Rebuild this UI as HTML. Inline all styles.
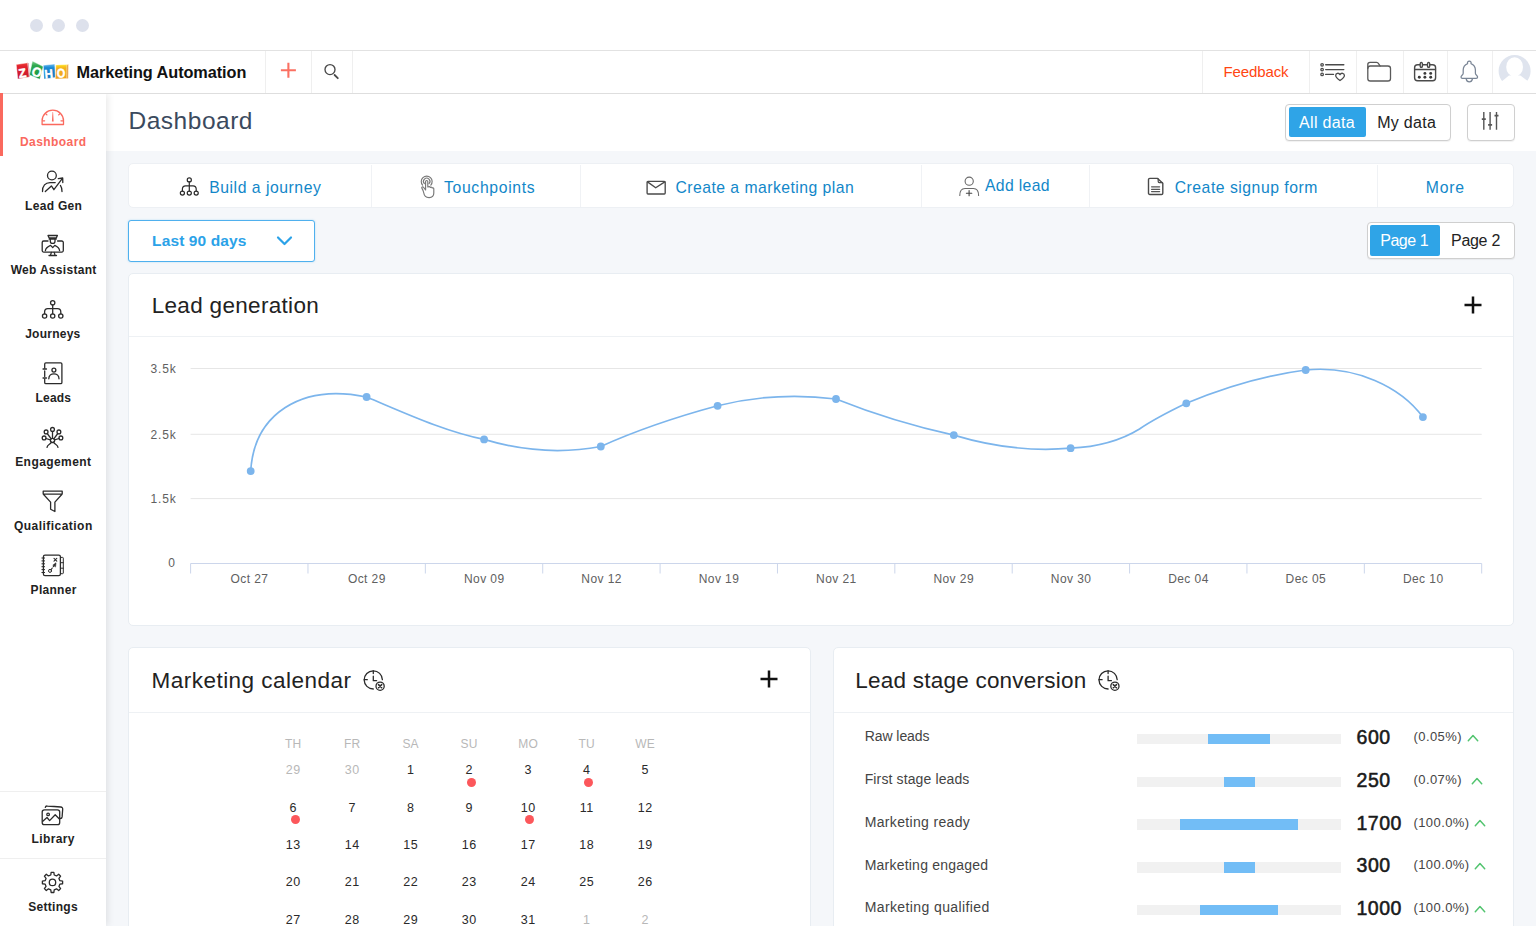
<!DOCTYPE html>
<html lang="en">
<head>
<meta charset="utf-8">
<title>Marketing Automation - Dashboard</title>
<style>
*{box-sizing:border-box;margin:0;padding:0}
html,body{width:1536px;height:926px;overflow:hidden;background:#f5f7fa;font-family:"Liberation Sans","DejaVu Sans",sans-serif;color:#222}
.t{position:absolute;white-space:nowrap;line-height:1;display:block}
.a{position:absolute;display:block}
svg{position:absolute;overflow:visible}
#win{position:absolute;left:0;top:0;width:1536px;height:51px;background:#fff;border-bottom:1px solid #e2e2e2}
#win i{position:absolute;top:19px;width:13px;height:13px;border-radius:50%;background:#dde1ec}
#hdr{position:absolute;left:0;top:51px;width:1536px;height:43px;background:#fff;border-bottom:1px solid #dedede;box-shadow:0 1px 1px rgba(0,0,0,.05)}
.vd{position:absolute;top:51px;width:1px;height:42px;background:#efefef}
#side{position:absolute;left:0;top:94px;width:106px;height:832px;background:#fff;box-shadow:2px 0 7px rgba(0,0,0,.09);clip-path:inset(0 -20px 0 0)}
#titlebar{position:absolute;left:106px;top:94px;width:1430px;height:57px;background:#fff}
.card{position:absolute;background:#fff;border:1px solid #e8edf2;border-radius:5px}
.hl{position:absolute;height:1px;background:#eef1f4}
.k{fill:none;stroke:#333;stroke-width:1.2;stroke-linecap:round;stroke-linejoin:round}
</style>
</head>
<body>
<div id="win"><i style="left:30px"></i><i style="left:52px"></i><i style="left:76px"></i></div>
<div id="hdr"></div>
<div id="titlebar"></div>
<div id="side"></div>
<div class="vd" style="left:265px"></div>
<div class="vd" style="left:311px"></div>
<div class="vd" style="left:352px"></div>
<div class="vd" style="left:1202px"></div>
<div class="vd" style="left:1309px"></div>
<div class="vd" style="left:1356px"></div>
<div class="vd" style="left:1403px"></div>
<div class="vd" style="left:1447px"></div>
<div class="vd" style="left:1492px"></div>
<span class="t" style="left:76.50px;top:64.00px;font-size:16.3px;font-weight:bold;color:#111;letter-spacing:-0.073px;">Marketing Automation</span>
<span class="t" style="left:1223.50px;top:64.00px;font-size:15px;font-weight:normal;color:#ff4511;letter-spacing:-0.110px;">Feedback</span>
<span class="t" style="left:128.50px;top:109.00px;font-size:24.5px;font-weight:normal;color:#3b4a5e;letter-spacing:0.516px;">Dashboard</span>
<div class="a" style="left:1285px;top:104px;width:166px;height:37px;border:1px solid #cfcfcf;border-radius:4px;background:#fff;box-shadow:0 1px 1px rgba(0,0,0,.06)"></div>
<div class="a" style="left:1289px;top:107px;width:77px;height:30px;background:#2fa4e7;border-radius:2px"></div>
<span class="t" style="left:1299.00px;top:115.00px;font-size:16px;font-weight:normal;color:#fff;letter-spacing:0.329px;">All data</span>
<span class="t" style="left:1377.20px;top:115.00px;font-size:16px;font-weight:normal;color:#222;letter-spacing:0.298px;">My data</span>
<div class="a" style="left:1467px;top:104px;width:48px;height:37px;border:1px solid #cfcfcf;border-radius:4px;background:#fff;box-shadow:0 1px 1px rgba(0,0,0,.06)"></div>
<div class="a" style="left:0;top:93px;width:3px;height:63px;background:#fa695e"></div>
<span class="t" style="left:20.00px;top:136.00px;font-size:12px;font-weight:bold;color:#fa695e;letter-spacing:0.425px;">Dashboard</span>
<span class="t" style="left:25.11px;top:200.00px;font-size:12px;font-weight:bold;color:#222;letter-spacing:0.300px;">Lead Gen</span>
<span class="t" style="left:10.69px;top:264.00px;font-size:12px;font-weight:bold;color:#222;letter-spacing:0.300px;">Web Assistant</span>
<span class="t" style="left:25.20px;top:328.00px;font-size:12px;font-weight:bold;color:#222;letter-spacing:0.243px;">Journeys</span>
<span class="t" style="left:35.50px;top:392.00px;font-size:12px;font-weight:bold;color:#222;letter-spacing:0.204px;">Leads</span>
<span class="t" style="left:15.20px;top:456.00px;font-size:12px;font-weight:bold;color:#222;letter-spacing:0.429px;">Engagement</span>
<span class="t" style="left:13.90px;top:520.00px;font-size:12px;font-weight:bold;color:#222;letter-spacing:0.471px;">Qualification</span>
<span class="t" style="left:30.59px;top:584.00px;font-size:12px;font-weight:bold;color:#222;letter-spacing:0.300px;">Planner</span>
<span class="t" style="left:31.50px;top:833.00px;font-size:12px;font-weight:bold;color:#222;letter-spacing:0.388px;">Library</span>
<span class="t" style="left:28.20px;top:901.00px;font-size:12px;font-weight:bold;color:#222;letter-spacing:0.308px;">Settings</span>
<div class="hl" style="left:0;top:791px;width:106px;background:#efefef"></div>
<div class="hl" style="left:0;top:858px;width:106px;background:#efefef"></div>
<div class="card" style="left:128px;top:163px;width:1386px;height:45px;border-color:#edf0f4"></div>
<div class="a" style="left:371px;top:165px;width:1px;height:42px;background:#f0f2f5"></div>
<div class="a" style="left:580px;top:165px;width:1px;height:42px;background:#f0f2f5"></div>
<div class="a" style="left:921px;top:165px;width:1px;height:42px;background:#f0f2f5"></div>
<div class="a" style="left:1089px;top:165px;width:1px;height:42px;background:#f0f2f5"></div>
<div class="a" style="left:1377px;top:165px;width:1px;height:42px;background:#f0f2f5"></div>
<span class="t" style="left:209.30px;top:180.00px;font-size:15.75px;font-weight:normal;color:#1287c9;letter-spacing:0.521px;">Build a journey</span>
<span class="t" style="left:444.00px;top:180.00px;font-size:15.75px;font-weight:normal;color:#1287c9;letter-spacing:0.658px;">Touchpoints</span>
<span class="t" style="left:675.50px;top:180.00px;font-size:15.75px;font-weight:normal;color:#1287c9;letter-spacing:0.457px;">Create a marketing plan</span>
<span class="t" style="left:985.00px;top:178.00px;font-size:15.75px;font-weight:normal;color:#1287c9;letter-spacing:0.340px;">Add lead</span>
<span class="t" style="left:1174.70px;top:180.00px;font-size:15.75px;font-weight:normal;color:#1287c9;letter-spacing:0.514px;">Create signup form</span>
<span class="t" style="left:1425.80px;top:180.00px;font-size:15.75px;font-weight:normal;color:#1287c9;letter-spacing:0.754px;">More</span>
<div class="a" style="left:128px;top:220px;width:187px;height:42px;border:1px solid #4fb0ee;border-radius:3px;background:#fff;box-shadow:0 0 2px rgba(47,164,231,.35)"></div>
<span class="t" style="left:152.10px;top:233.00px;font-size:15.5px;font-weight:bold;color:#2ba2e8;letter-spacing:0.112px;">Last 90 days</span>
<svg style="left:275px;top:235px" width="20" height="13" viewBox="0 0 20 13"><path d="M3 2.5 L9.5 9 L16 2.5" fill="none" stroke="#2ba2e8" stroke-width="2.2" stroke-linecap="round" stroke-linejoin="round"/></svg>
<div class="a" style="left:1366.5px;top:222px;width:148px;height:37px;border:1px solid #cfcfcf;border-radius:4px;background:#fff;box-shadow:0 1px 1px rgba(0,0,0,.06)"></div>
<div class="a" style="left:1369.5px;top:225px;width:70.5px;height:30.5px;background:#2fa4e7;border-radius:2px"></div>
<span class="t" style="left:1380.20px;top:233.00px;font-size:16px;font-weight:normal;color:#fff;letter-spacing:-0.452px;">Page 1</span>
<span class="t" style="left:1451.00px;top:233.00px;font-size:16px;font-weight:normal;color:#222;letter-spacing:-0.285px;">Page 2</span>
<div class="card" style="left:128px;top:273px;width:1386px;height:353px"></div>
<div class="hl" style="left:129px;top:336px;width:1384px"></div>
<span class="t" style="left:151.70px;top:295.00px;font-size:22.5px;font-weight:normal;color:#222;letter-spacing:0.317px;">Lead generation</span>
<svg style="left:1463.3px;top:294.9px" width="20" height="20" viewBox="0 0 20 20"><path d="M10 1.5 V18.5 M1.5 10 H18.5" stroke="#111" stroke-width="2.5" fill="none"/></svg>
<svg style="left:0;top:0" width="1536" height="926" viewBox="0 0 1536 926">
<path d="M190.6 368.5 H1481.7" stroke="#e6e6e6" stroke-width="1" fill="none"/>
<path d="M190.6 434.3 H1481.7" stroke="#e6e6e6" stroke-width="1" fill="none"/>
<path d="M190.6 498.6 H1481.7" stroke="#e6e6e6" stroke-width="1" fill="none"/>
<path d="M190.6 563.5 H1481.7" stroke="#ccd6eb" stroke-width="1" fill="none"/>
<path d="M190.60 563.5 V573.5 M307.97 563.5 V573.5 M425.35 563.5 V573.5 M542.72 563.5 V573.5 M660.09 563.5 V573.5 M777.46 563.5 V573.5 M894.84 563.5 V573.5 M1012.21 563.5 V573.5 M1129.58 563.5 V573.5 M1246.95 563.5 V573.5 M1364.33 563.5 V573.5 M1481.70 563.5 V573.5 " stroke="#ccd6eb" stroke-width="1" fill="none"/>
<path d="M250.7 471.1 C 254 415, 300 383, 366.6 397 C 405.8 413.4, 444.9 431.6, 484.1 439.4 C 523.0 451.1, 561.9 453.9, 600.8 446.5 C 639.7 429.0, 678.7 416.3, 717.6 405.8 C 757.1 395.9, 796.5 393.9, 836 399 C 875.3 414.7, 914.5 426.5, 953.8 435.1 C 992.7 446.8, 1031.7 451.7, 1070.6 448.2 C 1093.6 447.1, 1116.5 443.2, 1139.5 429 C 1155.1 418.4, 1170.7 410.8, 1186.3 403.3 C 1226.1 386.6, 1265.9 375.2, 1305.7 370 C 1355.7 365, 1400.9 387.1, 1422.9 417.1 " stroke="#7cb5ec" stroke-width="1.7" fill="none" stroke-linecap="round" stroke-linejoin="round"/>
<circle cx="250.7" cy="471.1" r="3.9" fill="#7cb5ec"/>
<circle cx="366.6" cy="397" r="3.9" fill="#7cb5ec"/>
<circle cx="484.1" cy="439.4" r="3.9" fill="#7cb5ec"/>
<circle cx="600.8" cy="446.5" r="3.9" fill="#7cb5ec"/>
<circle cx="717.6" cy="405.8" r="3.9" fill="#7cb5ec"/>
<circle cx="836" cy="399" r="3.9" fill="#7cb5ec"/>
<circle cx="953.8" cy="435.1" r="3.9" fill="#7cb5ec"/>
<circle cx="1070.6" cy="448.2" r="3.9" fill="#7cb5ec"/>
<circle cx="1186.3" cy="403.3" r="3.9" fill="#7cb5ec"/>
<circle cx="1305.7" cy="370" r="3.9" fill="#7cb5ec"/>
<circle cx="1422.9" cy="417.1" r="3.9" fill="#7cb5ec"/>
</svg>
<span class="t" style="left:150.50px;top:363.00px;font-size:12px;font-weight:normal;color:#606060;letter-spacing:0.830px;">3.5k</span>
<span class="t" style="left:150.50px;top:429.00px;font-size:12px;font-weight:normal;color:#606060;letter-spacing:0.830px;">2.5k</span>
<span class="t" style="left:150.50px;top:493.00px;font-size:12px;font-weight:normal;color:#606060;letter-spacing:0.830px;">1.5k</span>
<span class="t" style="left:168.20px;top:557.00px;font-size:12px;font-weight:normal;color:#606060;letter-spacing:1.126px;">0</span>
<span class="t" style="left:230.58px;top:573.00px;font-size:12px;font-weight:normal;color:#606060;letter-spacing:0.412px;">Oct 27</span>
<span class="t" style="left:347.95px;top:573.00px;font-size:12px;font-weight:normal;color:#606060;letter-spacing:0.412px;">Oct 29</span>
<span class="t" style="left:463.91px;top:573.00px;font-size:12px;font-weight:normal;color:#606060;letter-spacing:0.444px;">Nov 09</span>
<span class="t" style="left:581.28px;top:573.00px;font-size:12px;font-weight:normal;color:#606060;letter-spacing:0.444px;">Nov 12</span>
<span class="t" style="left:698.66px;top:573.00px;font-size:12px;font-weight:normal;color:#606060;letter-spacing:0.444px;">Nov 19</span>
<span class="t" style="left:816.03px;top:573.00px;font-size:12px;font-weight:normal;color:#606060;letter-spacing:0.444px;">Nov 21</span>
<span class="t" style="left:933.40px;top:573.00px;font-size:12px;font-weight:normal;color:#606060;letter-spacing:0.444px;">Nov 29</span>
<span class="t" style="left:1050.78px;top:573.00px;font-size:12px;font-weight:normal;color:#606060;letter-spacing:0.444px;">Nov 30</span>
<span class="t" style="left:1168.15px;top:573.00px;font-size:12px;font-weight:normal;color:#606060;letter-spacing:0.444px;">Dec 04</span>
<span class="t" style="left:1285.52px;top:573.00px;font-size:12px;font-weight:normal;color:#606060;letter-spacing:0.444px;">Dec 05</span>
<span class="t" style="left:1402.89px;top:573.00px;font-size:12px;font-weight:normal;color:#606060;letter-spacing:0.444px;">Dec 10</span>
<div class="card" style="left:128px;top:647px;width:683px;height:300px"></div>
<div class="hl" style="left:129px;top:712px;width:681px"></div>
<span class="t" style="left:151.50px;top:670.00px;font-size:22.5px;font-weight:normal;color:#222;letter-spacing:0.480px;">Marketing calendar</span>
<svg style="left:759.3px;top:669px" width="20" height="20" viewBox="0 0 20 20"><path d="M10 1.5 V18.5 M1.5 10 H18.5" stroke="#111" stroke-width="2.5" fill="none"/></svg>
<svg style="left:0;top:0" width="1536" height="926" viewBox="0 0 1536 926"><g fill="none" stroke="#2b2b2b" stroke-width="1.3" stroke-linecap="round" stroke-linejoin="round"><path d="M373.3 689.0 A9.1 9.1 0 1 1 382.40000000000003 679.6999999999999"/><path d="M373.3 670.8 V673.6 M364.2 679.6999999999999 H367.3 M373.3 676.1999999999999 V680.6999999999999 H376.6"/><circle cx="380.1" cy="686.1999999999999" r="4.1"/><path d="M378.5 684.6 L381.7 687.8 M381.7 684.6 L378.5 687.8" stroke-width="1.5"/></g></svg>
<span class="t" style="left:284.93px;top:738.00px;font-size:12px;font-weight:normal;color:#b8b8b8;letter-spacing:0.150px;">TH</span>
<span class="t" style="left:343.93px;top:738.00px;font-size:12px;font-weight:normal;color:#b8b8b8;letter-spacing:0.150px;">FR</span>
<span class="t" style="left:402.42px;top:738.00px;font-size:12px;font-weight:normal;color:#b8b8b8;letter-spacing:0.150px;">SA</span>
<span class="t" style="left:460.59px;top:738.00px;font-size:12px;font-weight:normal;color:#b8b8b8;letter-spacing:0.150px;">SU</span>
<span class="t" style="left:518.26px;top:738.00px;font-size:12px;font-weight:normal;color:#b8b8b8;letter-spacing:0.150px;">MO</span>
<span class="t" style="left:578.43px;top:738.00px;font-size:12px;font-weight:normal;color:#b8b8b8;letter-spacing:0.150px;">TU</span>
<span class="t" style="left:635.26px;top:738.00px;font-size:12px;font-weight:normal;color:#b8b8b8;letter-spacing:0.150px;">WE</span>
<span class="t" style="left:285.75px;top:764.00px;font-size:12.5px;font-weight:normal;color:#b8b8b8;letter-spacing:0.600px;">29</span>
<span class="t" style="left:344.75px;top:764.00px;font-size:12.5px;font-weight:normal;color:#b8b8b8;letter-spacing:0.600px;">30</span>
<span class="t" style="left:407.02px;top:764.00px;font-size:12.5px;font-weight:normal;color:#2a2a2a;letter-spacing:0.600px;">1</span>
<span class="t" style="left:465.52px;top:764.00px;font-size:12.5px;font-weight:normal;color:#2a2a2a;letter-spacing:0.600px;">2</span>
<span class="t" style="left:524.52px;top:764.00px;font-size:12.5px;font-weight:normal;color:#2a2a2a;letter-spacing:0.600px;">3</span>
<span class="t" style="left:583.02px;top:764.00px;font-size:12.5px;font-weight:normal;color:#2a2a2a;letter-spacing:0.600px;">4</span>
<span class="t" style="left:641.52px;top:764.00px;font-size:12.5px;font-weight:normal;color:#2a2a2a;letter-spacing:0.600px;">5</span>
<span class="t" style="left:289.52px;top:802.00px;font-size:12.5px;font-weight:normal;color:#2a2a2a;letter-spacing:0.600px;">6</span>
<span class="t" style="left:348.52px;top:802.00px;font-size:12.5px;font-weight:normal;color:#2a2a2a;letter-spacing:0.600px;">7</span>
<span class="t" style="left:407.02px;top:802.00px;font-size:12.5px;font-weight:normal;color:#2a2a2a;letter-spacing:0.600px;">8</span>
<span class="t" style="left:465.52px;top:802.00px;font-size:12.5px;font-weight:normal;color:#2a2a2a;letter-spacing:0.600px;">9</span>
<span class="t" style="left:520.75px;top:802.00px;font-size:12.5px;font-weight:normal;color:#2a2a2a;letter-spacing:0.600px;">10</span>
<span class="t" style="left:579.71px;top:802.00px;font-size:12.5px;font-weight:normal;color:#2a2a2a;letter-spacing:0.600px;">11</span>
<span class="t" style="left:637.75px;top:802.00px;font-size:12.5px;font-weight:normal;color:#2a2a2a;letter-spacing:0.600px;">12</span>
<span class="t" style="left:285.75px;top:839.00px;font-size:12.5px;font-weight:normal;color:#2a2a2a;letter-spacing:0.600px;">13</span>
<span class="t" style="left:344.75px;top:839.00px;font-size:12.5px;font-weight:normal;color:#2a2a2a;letter-spacing:0.600px;">14</span>
<span class="t" style="left:403.25px;top:839.00px;font-size:12.5px;font-weight:normal;color:#2a2a2a;letter-spacing:0.600px;">15</span>
<span class="t" style="left:461.75px;top:839.00px;font-size:12.5px;font-weight:normal;color:#2a2a2a;letter-spacing:0.600px;">16</span>
<span class="t" style="left:520.75px;top:839.00px;font-size:12.5px;font-weight:normal;color:#2a2a2a;letter-spacing:0.600px;">17</span>
<span class="t" style="left:579.25px;top:839.00px;font-size:12.5px;font-weight:normal;color:#2a2a2a;letter-spacing:0.600px;">18</span>
<span class="t" style="left:637.75px;top:839.00px;font-size:12.5px;font-weight:normal;color:#2a2a2a;letter-spacing:0.600px;">19</span>
<span class="t" style="left:285.75px;top:876.00px;font-size:12.5px;font-weight:normal;color:#2a2a2a;letter-spacing:0.600px;">20</span>
<span class="t" style="left:344.75px;top:876.00px;font-size:12.5px;font-weight:normal;color:#2a2a2a;letter-spacing:0.600px;">21</span>
<span class="t" style="left:403.25px;top:876.00px;font-size:12.5px;font-weight:normal;color:#2a2a2a;letter-spacing:0.600px;">22</span>
<span class="t" style="left:461.75px;top:876.00px;font-size:12.5px;font-weight:normal;color:#2a2a2a;letter-spacing:0.600px;">23</span>
<span class="t" style="left:520.75px;top:876.00px;font-size:12.5px;font-weight:normal;color:#2a2a2a;letter-spacing:0.600px;">24</span>
<span class="t" style="left:579.25px;top:876.00px;font-size:12.5px;font-weight:normal;color:#2a2a2a;letter-spacing:0.600px;">25</span>
<span class="t" style="left:637.75px;top:876.00px;font-size:12.5px;font-weight:normal;color:#2a2a2a;letter-spacing:0.600px;">26</span>
<span class="t" style="left:285.75px;top:914.00px;font-size:12.5px;font-weight:normal;color:#2a2a2a;letter-spacing:0.600px;">27</span>
<span class="t" style="left:344.75px;top:914.00px;font-size:12.5px;font-weight:normal;color:#2a2a2a;letter-spacing:0.600px;">28</span>
<span class="t" style="left:403.25px;top:914.00px;font-size:12.5px;font-weight:normal;color:#2a2a2a;letter-spacing:0.600px;">29</span>
<span class="t" style="left:461.75px;top:914.00px;font-size:12.5px;font-weight:normal;color:#2a2a2a;letter-spacing:0.600px;">30</span>
<span class="t" style="left:520.75px;top:914.00px;font-size:12.5px;font-weight:normal;color:#2a2a2a;letter-spacing:0.600px;">31</span>
<span class="t" style="left:583.02px;top:914.00px;font-size:12.5px;font-weight:normal;color:#b8b8b8;letter-spacing:0.600px;">1</span>
<span class="t" style="left:641.52px;top:914.00px;font-size:12.5px;font-weight:normal;color:#b8b8b8;letter-spacing:0.600px;">2</span>
<div class="a" style="left:466.5px;top:777.8px;width:9px;height:9px;border-radius:50%;background:#fc575b"></div>
<div class="a" style="left:583.5px;top:777.8px;width:9px;height:9px;border-radius:50%;background:#fc575b"></div>
<div class="a" style="left:290.5px;top:815.0px;width:9px;height:9px;border-radius:50%;background:#fc575b"></div>
<div class="a" style="left:525.0px;top:815.0px;width:9px;height:9px;border-radius:50%;background:#fc575b"></div>
<div class="card" style="left:833px;top:647px;width:681px;height:300px"></div>
<div class="hl" style="left:834px;top:712px;width:679px"></div>
<span class="t" style="left:855.30px;top:670.00px;font-size:22.5px;font-weight:normal;color:#222;letter-spacing:0.228px;">Lead stage conversion</span>
<svg style="left:0;top:0" width="1536" height="926" viewBox="0 0 1536 926"><g fill="none" stroke="#2b2b2b" stroke-width="1.3" stroke-linecap="round" stroke-linejoin="round"><path d="M1108.1 689.0 A9.1 9.1 0 1 1 1117.1999999999998 679.6999999999999"/><path d="M1108.1 670.8 V673.6 M1099.0 679.6999999999999 H1102.1 M1108.1 676.1999999999999 V680.6999999999999 H1111.3999999999999"/><circle cx="1114.8999999999999" cy="686.1999999999999" r="4.1"/><path d="M1113.3 684.6 L1116.5 687.8 M1116.5 684.6 L1113.3 687.8" stroke-width="1.5"/></g></svg>
<span class="t" style="left:864.70px;top:729.00px;font-size:14px;font-weight:normal;color:#444;letter-spacing:-0.063px;">Raw leads</span>
<div class="a" style="left:1137px;top:733.90px;width:204px;height:10.4px;background:#f1f1f1"></div>
<div class="a" style="left:1207.5px;top:733.90px;width:62.7px;height:10.4px;background:#72bdf6"></div>
<span class="t" style="left:1356.50px;top:728.00px;font-size:19.5px;font-weight:normal;color:#1a1a1a;letter-spacing:0.555px;-webkit-text-stroke:.55px #1a1a1a;">600</span>
<span class="t" style="left:1413.50px;top:730.00px;font-size:13px;font-weight:normal;color:#444;letter-spacing:0.426px;">(0.05%)</span>
<svg style="left:1466.5px;top:733.70px" width="12" height="8" viewBox="0 0 12 8"><path d="M1.3 6.7 L6 1.6 L10.7 6.7" fill="none" stroke="#52c46f" stroke-width="1.5" stroke-linecap="round" stroke-linejoin="round"/></svg>
<span class="t" style="left:864.70px;top:772.00px;font-size:14px;font-weight:normal;color:#444;letter-spacing:0.123px;">First stage leads</span>
<div class="a" style="left:1137px;top:776.65px;width:204px;height:10.4px;background:#f1f1f1"></div>
<div class="a" style="left:1223.5px;top:776.65px;width:31.0px;height:10.4px;background:#72bdf6"></div>
<span class="t" style="left:1356.50px;top:771.00px;font-size:19.5px;font-weight:normal;color:#1a1a1a;letter-spacing:0.555px;-webkit-text-stroke:.55px #1a1a1a;">250</span>
<span class="t" style="left:1413.50px;top:773.00px;font-size:13px;font-weight:normal;color:#444;letter-spacing:0.426px;">(0.07%)</span>
<svg style="left:1470.7px;top:776.50px" width="12" height="8" viewBox="0 0 12 8"><path d="M1.3 6.7 L6 1.6 L10.7 6.7" fill="none" stroke="#52c46f" stroke-width="1.5" stroke-linecap="round" stroke-linejoin="round"/></svg>
<span class="t" style="left:864.70px;top:815.00px;font-size:14px;font-weight:normal;color:#444;letter-spacing:0.341px;">Marketing ready</span>
<div class="a" style="left:1137px;top:819.40px;width:204px;height:10.4px;background:#f1f1f1"></div>
<div class="a" style="left:1179.7px;top:819.40px;width:118.5px;height:10.4px;background:#72bdf6"></div>
<span class="t" style="left:1356.50px;top:814.00px;font-size:19.5px;font-weight:normal;color:#1a1a1a;letter-spacing:0.530px;-webkit-text-stroke:.55px #1a1a1a;">1700</span>
<span class="t" style="left:1413.50px;top:816.00px;font-size:13px;font-weight:normal;color:#444;letter-spacing:0.406px;">(100.0%)</span>
<svg style="left:1474px;top:819.20px" width="12" height="8" viewBox="0 0 12 8"><path d="M1.3 6.7 L6 1.6 L10.7 6.7" fill="none" stroke="#52c46f" stroke-width="1.5" stroke-linecap="round" stroke-linejoin="round"/></svg>
<span class="t" style="left:864.70px;top:858.00px;font-size:14px;font-weight:normal;color:#444;letter-spacing:0.220px;">Marketing engaged</span>
<div class="a" style="left:1137px;top:862.15px;width:204px;height:10.4px;background:#f1f1f1"></div>
<div class="a" style="left:1223.5px;top:862.15px;width:31.0px;height:10.4px;background:#72bdf6"></div>
<span class="t" style="left:1356.50px;top:856.00px;font-size:19.5px;font-weight:normal;color:#1a1a1a;letter-spacing:0.555px;-webkit-text-stroke:.55px #1a1a1a;">300</span>
<span class="t" style="left:1413.50px;top:858.00px;font-size:13px;font-weight:normal;color:#444;letter-spacing:0.406px;">(100.0%)</span>
<svg style="left:1474px;top:862.00px" width="12" height="8" viewBox="0 0 12 8"><path d="M1.3 6.7 L6 1.6 L10.7 6.7" fill="none" stroke="#52c46f" stroke-width="1.5" stroke-linecap="round" stroke-linejoin="round"/></svg>
<span class="t" style="left:864.70px;top:900.00px;font-size:14px;font-weight:normal;color:#444;letter-spacing:0.394px;">Marketing qualified</span>
<div class="a" style="left:1137px;top:904.90px;width:204px;height:10.4px;background:#f1f1f1"></div>
<div class="a" style="left:1200px;top:904.90px;width:77.7px;height:10.4px;background:#72bdf6"></div>
<span class="t" style="left:1356.50px;top:899.00px;font-size:19.5px;font-weight:normal;color:#1a1a1a;letter-spacing:0.530px;-webkit-text-stroke:.55px #1a1a1a;">1000</span>
<span class="t" style="left:1413.50px;top:901.00px;font-size:13px;font-weight:normal;color:#444;letter-spacing:0.406px;">(100.0%)</span>
<svg style="left:1474px;top:904.70px" width="12" height="8" viewBox="0 0 12 8"><path d="M1.3 6.7 L6 1.6 L10.7 6.7" fill="none" stroke="#52c46f" stroke-width="1.5" stroke-linecap="round" stroke-linejoin="round"/></svg>
<svg style="left:0;top:51px" width="100" height="42" viewBox="0 51 100 42" font-family="Liberation Sans, sans-serif" font-weight="bold" fill="#fff" stroke="#fff" stroke-width=".45" stroke-linejoin="round" text-anchor="middle">
<defs>
<linearGradient id="gr" x1="0" y1="0" x2="0" y2="1"><stop offset="0" stop-color="#ee4036"/><stop offset=".22" stop-color="#e2232f"/><stop offset="1" stop-color="#c4172e"/></linearGradient>
<linearGradient id="gg" x1="0" y1="0" x2="0" y2="1"><stop offset="0" stop-color="#7fcf8f"/><stop offset=".25" stop-color="#2fa84f"/><stop offset="1" stop-color="#139742"/></linearGradient>
<linearGradient id="gb" x1="0" y1="0" x2="0" y2="1"><stop offset="0" stop-color="#6cbcf0"/><stop offset=".25" stop-color="#1c8bd6"/><stop offset="1" stop-color="#0d73ba"/></linearGradient>
<linearGradient id="gy" x1="0" y1="0" x2="0" y2="1"><stop offset="0" stop-color="#ffe21a"/><stop offset=".25" stop-color="#f5b21c"/><stop offset="1" stop-color="#eea11c"/></linearGradient>
</defs>
<polygon points="16.2,64.5 27.8,62.8 29.4,77 17.8,79.1" fill="url(#gr)"/>
<polygon points="27.8,62.8 28.6,63.6 30,76.6 29.4,77" fill="#a3122a"/>
<polygon points="32.4,61 43.2,66.6 39.8,79.2 29.5,74.9" fill="url(#gg)"/>
<polygon points="43.3,65.3 54.8,63.9 55.3,77.5 44.1,79.1" fill="url(#gb)"/>
<polygon points="55.8,64.9 68.3,64.6 68.1,78.6 55.3,79.1" fill="url(#gy)"/>
<polygon points="66.9,64.7 68.3,64.6 68.1,78.6 66.7,78.7" fill="#e08a1e"/>
<text transform="translate(22.9,77.5) rotate(-8) scale(.98,1)" font-size="12.6">Z</text>
<text transform="translate(35.0,76.3) rotate(24) scale(.96,1)" font-size="13.2">O</text>
<text transform="translate(49.2,78.0) rotate(-6) scale(.95,1)" font-size="12.2">H</text>
<text transform="translate(61.1,77.7) rotate(-2) scale(.85,1)" font-size="12.8">O</text>
</svg>
<svg style="left:0;top:0" width="1536" height="926" viewBox="0 0 1536 926">
<g fill="none" stroke="#fa695e" stroke-width="1.3" stroke-linecap="round" stroke-linejoin="round"><path d="M42.1 124.5 V120.8 A10.7 10.7 0 0 1 63.5 120.8 V124.5 Z"/><path d="M42.6 120.8 H44.6 M61 120.8 H63 M45.6 113.6 L46.9 114.9 M60 113.6 L58.7 114.9"/></g><path d="M52.55 112 L53.05 112 L53.7 121.6 L51.9 121.6 Z" fill="#fa695e"/>
<g fill="none" stroke="#2b2b2b" stroke-width="1.3" stroke-linecap="round" stroke-linejoin="round"><circle cx="51.9" cy="175.5" r="4.4"/><path d="M42.5 191.6 C42.3 185.5 45.5 182.7 50 182.6 H55.2 M60.4 185.4 C61.6 187 62 189 62 191.6"/><path d="M45.3 191.5 L51.4 185.9 L53.9 189.7 L62.6 178.2 M58.3 178.7 L62.7 178 L62.8 182.5"/></g>
<g fill="none" stroke="#2b2b2b" stroke-width="1.3" stroke-linecap="round" stroke-linejoin="round"><path d="M48 241 H43.7 A1.5 1.5 0 0 0 42.2 242.5 V250.6 A1.5 1.5 0 0 0 43.7 252.1 H61.8 A1.5 1.5 0 0 0 63.3 250.6 V242.5 A1.5 1.5 0 0 0 61.8 241 H57.6"/><path d="M51.4 252.4 L50.4 255.4 M54.2 252.4 L55.1 255.4 M49 255.5 H56.5"/><path d="M48 235.5 H57.4 L56.4 237.8 H49 Z M49.3 237.8 V239.2 H56.1 V237.8"/><path d="M50.3 239.4 V241.2 C50.3 244.2 55 244.2 55 241.2 V239.4"/><path d="M45.4 250.6 C45.8 247.6 47.4 246.8 50.6 245.4 L52.7 247.6 L54.8 245.4 C58 246.8 59.2 247.6 59.6 250.6"/></g>
<g fill="none" stroke="#2b2b2b" stroke-width="1.3" stroke-linecap="round" stroke-linejoin="round"><circle cx="52.7" cy="302.8" r="2.15"/><circle cx="44.6" cy="316.0" r="2.15"/><circle cx="52.7" cy="316.0" r="2.15"/><circle cx="60.800000000000004" cy="316.0" r="2.15"/><path d="M52.7 304.95 V313.85 M44.6 313.85 V311.9 A3.2 3.2 0 0 1 47.800000000000004 308.7 H57.6 A3.2 3.2 0 0 1 60.800000000000004 311.9 V313.85"/></g>
<g fill="none" stroke="#2b2b2b" stroke-width="1.3" stroke-linecap="round" stroke-linejoin="round"><path d="M44.7 368.2 V364 A1.2 1.2 0 0 1 45.9 362.8 H60.7 A1.2 1.2 0 0 1 61.9 364 V382.4 A1.2 1.2 0 0 1 60.7 383.6 H45.9 A1.2 1.2 0 0 1 44.7 382.4 V379 M44.7 371 V376.4"/><path d="M43.1 369.1 H46.4 M43.1 377.9 H46.4" stroke-width="1.5"/><circle cx="53.9" cy="370.1" r="1.95"/><path d="M48.8 378.8 C48.8 372.2 59 372.2 59 378.8"/></g>
<g fill="none" stroke="#2b2b2b" stroke-width="1.3" stroke-linecap="round" stroke-linejoin="round"><circle cx="52.5" cy="440.4" r="2.1"/><circle cx="52.5" cy="429.4" r="1.9"/><circle cx="46.1" cy="431.9" r="1.9"/><circle cx="58.9" cy="431.9" r="1.9"/><circle cx="44.1" cy="437.9" r="1.9"/><circle cx="60.9" cy="437.9" r="1.9"/><path d="M52.5 431.3 V438.3 M47.2 433.5 L51.2 438.8 M57.8 433.5 L53.8 438.8 M45.9 438.5 L50.5 439.9 M59.1 438.5 L54.5 439.9"/><path d="M51.4 442.2 C50.5 444.4 47.4 444.3 47 447.3 M53.6 442.2 C54.5 444.4 57.6 444.3 58 447.3"/></g>
<g fill="none" stroke="#2b2b2b" stroke-width="1.3" stroke-linecap="round" stroke-linejoin="round"><path d="M43.2 491.1 H62.2 V494.1 H43.2 Z M43.4 494.3 L50.6 502.1 V509.2 L54.9 511.5 V502.1 L62 494.3"/></g>
<g fill="none" stroke="#2b2b2b" stroke-width="1.3" stroke-linecap="round" stroke-linejoin="round"><rect x="43.4" y="555.1" width="17" height="20.5" rx="1.6"/><path d="M41.9 558 H44.6 M41.9 560.9 H44.6 M41.9 563.8 H44.6 M41.9 566.7 H44.6 M41.9 569.6 H44.6 M41.9 572.5 H44.6" stroke-width="1"/><path d="M60.4 557.4 H62.6 A.7 .7 0 0 1 63.3 558.1 V573 A.7 .7 0 0 1 62.6 573.7 H60.4 M60.4 562.7 H63.3 M60.4 568.2 H63.3" stroke-width="1"/><path d="M54 558.3 L56.8 561.1 M56.8 558.3 L54 561.1" stroke-width="1.1"/><circle cx="50" cy="570.9" r="1.5" stroke-width="1"/><path d="M51.3 569.4 L52.3 568 M53.3 566.6 L54.6 564.8" stroke-width="1.1"/><path d="M53.1 565 L56 562.8 L55.6 566.6 Z" fill="#2b2b2b" stroke-width=".6"/></g>
<g fill="none" stroke="#2b2b2b" stroke-width="1.3" stroke-linecap="round" stroke-linejoin="round"><rect x="42.2" y="809.8" width="17.5" height="14.8" rx="2.2"/><path d="M45.3 807.3 C45.5 806.3 46.3 805.9 47.3 806 L60.8 807 C62 807.1 62.8 807.9 62.7 809.1 L62.1 816.9 C62 817.9 61.3 818.5 60.3 818.5"/><circle cx="48.1" cy="814.4" r="1.3"/><path d="M42.8 821.2 L47 817.5 L49.6 820.6 L55.2 814.8 L59.4 819"/></g>
<g fill="none" stroke="#2b2b2b" stroke-width="1.3" stroke-linecap="round" stroke-linejoin="round"><path d="M51.14 872.29 L53.86 872.29 L54.22 875.00 L56.52 875.95 L58.69 874.29 L60.61 876.21 L58.95 878.38 L59.90 880.68 L62.61 881.04 L62.61 883.76 L59.90 884.12 L58.95 886.42 L60.61 888.59 L58.69 890.51 L56.52 888.85 L54.22 889.80 L53.86 892.51 L51.14 892.51 L50.78 889.80 L48.48 888.85 L46.31 890.51 L44.39 888.59 L46.05 886.42 L45.10 884.12 L42.39 883.76 L42.39 881.04 L45.10 880.68 L46.05 878.38 L44.39 876.21 L46.31 874.29 L48.48 875.95 L50.78 875.00 Z"/><circle cx="52.5" cy="882.4" r="3.2"/></g>
</svg>
<svg style="left:0;top:0" width="1536" height="926" viewBox="0 0 1536 926">
<path d="M288.4 62.8 V77.8 M280.9 70.3 H295.9" fill="none" stroke="#fb7062" stroke-width="2.1"/>
<g fill="none" stroke="#484848" stroke-linecap="round"><circle cx="330" cy="69.6" r="5" stroke-width="1.35"/><path d="M334.6 75 L337.8 78.2" stroke-width="1.8"/></g>
<g fill="none" stroke="#4a4a4a" stroke-width="1.3" stroke-linecap="round" stroke-linejoin="round"><circle cx="1322.1" cy="64.8" r="1.25"/><circle cx="1322.1" cy="69.6" r="1.25"/><circle cx="1322.1" cy="74.4" r="1.25"/><path d="M1325.7 64.8 H1343.8 M1325.7 69.6 H1343.8 M1325.7 74.4 H1333.5" stroke-width="1.4"/><path d="M1340 80.6 C1337.6 78.8 1335.7 77.3 1335.7 75.4 C1335.7 72.9 1338.9 72.5 1340 74.6 C1341.1 72.5 1344.4 72.9 1344.4 75.4 C1344.4 77.3 1342.4 78.8 1340 80.6 Z"/></g>
<g fill="none" stroke="#5a5a5a" stroke-width="1.3" stroke-linecap="round" stroke-linejoin="round"><rect x="1367.8" y="66" width="22.7" height="15" rx="2.6"/><path d="M1367.8 68.6 V64.6 A2.2 2.2 0 0 1 1370 62.4 H1376.6 C1378 62.4 1378.3 63.2 1378.9 64.2 L1380.1 66"/></g>
<g fill="none" stroke="#4a4a4a" stroke-width="1.4" stroke-linecap="round" stroke-linejoin="round"><rect x="1414.6" y="64.7" width="21" height="16" rx="3"/><path d="M1414.8 69.5 H1435.4"/><ellipse cx="1421.3" cy="64.9" rx="1.15" ry="2.5" fill="#fff"/><ellipse cx="1428.6" cy="64.9" rx="1.15" ry="2.5" fill="#fff"/></g><g fill="#3a3a3a"><circle cx="1419.3" cy="77.2" r="1.45"/><circle cx="1424.9" cy="73.4" r="1.45"/><circle cx="1430.7" cy="73.4" r="1.45"/><circle cx="1424.9" cy="77.2" r="1.45"/><circle cx="1430.7" cy="77.2" r="1.45"/></g>
<g fill="none" stroke="#7b8696" stroke-width="1.25" stroke-linecap="round" stroke-linejoin="round"><path d="M1467.6 63.6 A1.85 1.85 0 1 1 1471 63.6 C1474.2 64.9 1475.4 67.2 1475.4 70 V73.2 C1475.4 75 1477.6 75.4 1477.6 77 C1477.6 77.9 1477 78.4 1476.2 78.4 H1462.4 C1461.6 78.4 1461 77.9 1461 77 C1461 75.4 1463.2 75 1463.2 73.2 V70 C1463.2 67.2 1464.4 64.9 1467.6 63.6 Z"/><path d="M1466.2 78.8 C1466.8 82.8 1471.8 82.8 1472.4 78.8"/></g>
<clipPath id="av"><circle cx="1514.6" cy="71" r="16"/></clipPath><circle cx="1514.6" cy="71" r="16" fill="#dfe4ee"/><g fill="#fff"><ellipse cx="1514.6" cy="66.9" rx="8.4" ry="9.7"/><path d="M1509 75.5 L1501.6 81.6 L1496 92 H1533 L1528.4 81.4 L1520.4 75.5 Z"/></g>
<g fill="none" stroke="#555" stroke-width="1.4"><path d="M1483.8 112 V129.8 M1490.1 112 V129.8 M1496.5 112 V129.8"/><path d="M1481.8 119.2 H1485.8 M1488.1 124.9 H1492.1 M1494.5 115.7 H1498.5" stroke-width="1.7"/></g>
<g fill="none" stroke="#2b2b2b" stroke-width="1.2" stroke-linecap="round" stroke-linejoin="round"><circle cx="189.3" cy="179.9" r="2.05"/><circle cx="182.4" cy="193.1" r="2.05"/><circle cx="189.3" cy="193.1" r="2.05"/><circle cx="196.20000000000002" cy="193.1" r="2.05"/><path d="M189.3 181.95000000000002 V191.04999999999998 M182.4 191.04999999999998 V189.0 A3.2 3.2 0 0 1 185.6 185.8 H193.00000000000003 A3.2 3.2 0 0 1 196.20000000000002 189.0 V191.04999999999998"/></g>
<g fill="none" stroke="#777" stroke-width="1.15" stroke-linecap="round" stroke-linejoin="round"><path d="M422.6 185.1 A5.45 5.45 0 1 1 430.8 185.1"/><path d="M424.4 183.6 A3.2 3.2 0 1 1 429 183.6"/><path d="M425.6 190 V181.6 A1.1 1.1 0 0 1 427.8 181.6 V187 C429 186.2 430 186.6 430.2 187.4 C431.2 186.8 432 187.2 432.2 188 C433.2 187.6 433.8 188.2 433.8 189 V193 C433.8 199 424.6 199.2 423.8 193 C423.4 190.6 422.4 189 421.8 188 C421.4 187 422.6 186.4 423.4 187.2 L425.6 190"/></g>
<g fill="none" stroke="#4a4a4a" stroke-width="1.35" stroke-linecap="round" stroke-linejoin="round"><rect x="647.1" y="181.4" width="18.1" height="12.6" rx=".9"/><path d="M647.5 181.9 L655.7 187.8 L664.8 181.9"/></g>
<g fill="none" stroke="#6a6a6a" stroke-width="1.1" stroke-linecap="round" stroke-linejoin="round"><circle cx="969.2" cy="181.2" r="4.1"/><path d="M959.8 195.5 C959.8 191 961.4 188.5 965 188.5 H973.4 C977 188.5 978.6 191 978.6 195.5"/><path d="M969.1 190.6 V195.8 M966.4 193.2 H971.8" stroke="#444"/></g>
<g fill="none" stroke="#4a4a4a" stroke-width="1.4" stroke-linecap="round" stroke-linejoin="round"><path d="M1149.8 178.4 H1157.6 L1162.8 183.2 V193.2 A1.3 1.3 0 0 1 1161.5 194.5 H1149.8 A1.3 1.3 0 0 1 1148.5 193.2 V179.7 A1.3 1.3 0 0 1 1149.8 178.4 Z"/><path d="M1158.2 178.8 V181.6 A1 1 0 0 0 1159.2 182.6 H1162.4" stroke-width="1.2"/><path d="M1151.6 186.8 H1159.6 M1151.6 189.3 H1159.6 M1151.6 191.6 H1159.6" stroke-width="1.3" stroke="#555"/></g>
</svg>
</body>
</html>
